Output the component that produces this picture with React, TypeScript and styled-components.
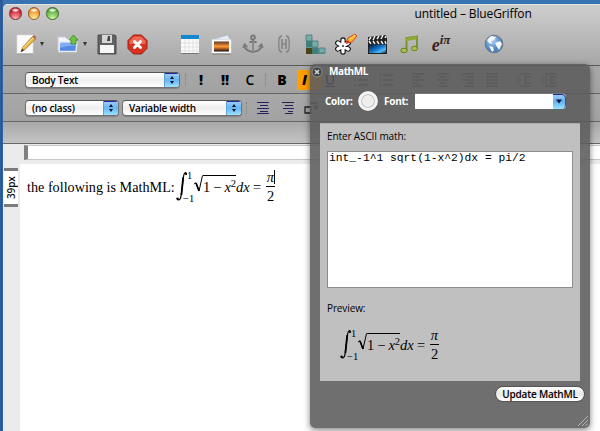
import React from "react";
import styled, { createGlobalStyle } from "styled-components";

const UI = `"Open Sans", "Noto Sans", sans-serif`;

const Global = createGlobalStyle`
  * { box-sizing: border-box; }
  html, body { margin: 0; overflow: hidden; }
  svg { display: block; flex: none; }
`;

const Desktop = styled.div`
  width: 600px;
  height: 431px;
  padding: 4px 0 0 3px;
  overflow: hidden;
  position: relative;
  background: linear-gradient(90deg, #3060a0 0, #285290 2px, #3974b2 3px);
  font-family: ${UI};
  color: #111;
`;
const AppWindow = styled.div`
  width: 597px;
  height: 427px;
  display: flex;
  flex-direction: column;
  border-top-left-radius: 5px;
  overflow: hidden;
  background: #fff;
`;
const Header = styled.header`
  height: 62px;
  flex: none;
  border-top: 1px solid #e3e3e3;
  border-bottom: 1px solid #595959;
  background: linear-gradient(#cecece, #a7a7a7);
`;
const TitleBar = styled.div`
  height: 17px;
  display: flex;
  align-items: center;
  padding-left: 6px;
  gap: 6px;
`;
const Light = styled.i<{ $rim: string; $top: string; $low: string }>`
  width: 12.5px;
  height: 12.5px;
  border-radius: 50%;
  border: 1px solid ${(p) => p.$rim};
  background: radial-gradient(ellipse 4px 2px at 50% 20%, #fff 0, #fff9 60%, transparent 100%),
    radial-gradient(circle at 50% 95%, ${(p) => p.$low} 0, ${(p) => p.$top} 75%);
`;
const Title = styled.div`
  margin-left: 350px;
  font-size: 12px;
  line-height: 17px;
  letter-spacing: -0.12px;
  font-weight: 500;
  white-space: nowrap;
  color: #000;
`;
const MainTools = styled.div`
  height: 44px;
  display: flex;
  align-items: center;
  padding-left: 12px;
`;
const Slot = styled.span<{ $w: number; $gap?: number }>`
  width: ${(p) => p.$w}px;
  margin-left: ${(p) => p.$gap ?? 0}px;
  flex: none;
  display: flex;
  align-items: center;
  justify-content: center;
`;
const Caret = styled.i<{ $gap: number }>`
  margin: 0 0 0 ${(p) => p.$gap}px;
  border: 2.5px solid transparent;
  border-top: 4px solid #333;
  border-bottom: 0;
`;
const Row = styled.div`
  height: 28px;
  flex: none;
  display: flex;
  align-items: center;
  padding-left: 22px;
  border-bottom: 1px solid #666;
  background: linear-gradient(#a8a8a8, #a2a2a2);
`;
const SelectBox = styled.div<{ $w: number; $gap?: number }>`
  width: ${(p) => p.$w}px;
  height: 16px;
  margin-left: ${(p) => p.$gap ?? 0}px;
  flex: none;
  display: flex;
  justify-content: space-between;
  border: 1px solid #727272;
  border-top-color: #555;
  border-radius: 4px;
  overflow: hidden;
  background: linear-gradient(#fff, #eee 50%, #fff);
  box-shadow: 0 1px 1px #6668;
  padding-left: 6px;
  font-size: 10px;
  line-height: 14px;
  font-weight: 600;
  letter-spacing: -0.2px;
  color: #000;
  white-space: nowrap;
`;
const Stepper = styled.span`
  width: 15px;
  display: flex;
  align-items: center;
  justify-content: center;
  border-left: 1px solid #5a9fd6;
  box-shadow: inset 0 1px #2727a8;
  background: linear-gradient(#a2cdf3, #67b5f2 50%, #9be2ff);
`;
const Grip = styled.i<{ $gap: number }>`
  width: 2px;
  height: 12px;
  margin-left: ${(p) => p.$gap}px;
  border-left: 1px dotted #808080;
  flex: none;
`;
const Glyph = styled.span<{ $w: number; $gap?: number; $bold?: boolean; $on?: boolean }>`
  width: ${(p) => p.$w}px;
  height: ${(p) => (p.$on ? 20 : 18)}px;
  margin-left: ${(p) => p.$gap ?? 0}px;
  padding-left: ${(p) => (p.$on ? 5 : 0)}px;
  flex: none;
  font-size: 14px;
  line-height: ${(p) => (p.$on ? 20 : 18)}px;
  font-weight: ${(p) => (p.$bold ? 800 : 600)};
  text-align: ${(p) => (p.$on ? "left" : "center")};
  font-style: ${(p) => (p.$on ? "italic" : "normal")};
  background: ${(p) => (p.$on ? "#ffa000" : "none")};
  color: #000;
`;
const TabStrip = styled.div`
  height: 22px;
  flex: none;
  border-bottom: 1px solid #666;
  background: linear-gradient(#a8a8a8, #c3c3c3);
`;
const Editor = styled.main`
  flex: 1;
  display: flex;
  background: #ebebeb;
`;
const Gutter = styled.aside`
  width: 17px;
  padding: 24px 0 0 1px;
`;
const HeightMark = styled.div`
  width: 14px;
  height: 39px;
  display: flex;
  align-items: center;
  justify-content: center;
  border: solid #7b7b7b;
  border-width: 3px 0;
  background: #fff;
  writing-mode: vertical-rl;
  transform: rotate(180deg);
  font-size: 10px;
  line-height: 14px;
  font-weight: 600;
  letter-spacing: -0.1px;
`;
const Column = styled.div`
  flex: 1;
  display: flex;
  flex-direction: column;
`;
const Ruler = styled.div`
  height: 15px;
  margin: 1px 0 4px 4px;
  border: 1px solid #c6c6c6;
  border-width: 1px 0 1px 4px;
  border-left-color: #808080;
  background: #fff;
`;
const Page = styled.article`
  flex: 1;
  padding: 6px 0 0 7px;
  display: flex;
  align-items: flex-start;
  background: #fff;
`;
const Sentence = styled.span`
  width: 149px;
  flex: none;
  font: 14.2px/20px "Liberation Serif", serif;
  margin-top: 7px;
  white-space: nowrap;
  color: #000;
`;

const MathBox = styled.div`
  display: flex;
  height: 42px;
  color: #000;
  font: 14.5px/18px "Liberation Serif", serif;
  white-space: nowrap;
`;
const Limits = styled.span`
  width: 11px;
  height: 34px;
  display: flex;
  flex-direction: column;
  justify-content: space-between;
  margin-left: -8px;
  font-size: 10.5px;
  line-height: 11px;
`;
const Upper = styled.span`
  padding-left: 4px;
`;
const Radicand = styled.span`
  width: 33px;
  height: 20px;
  margin-top: 5px;
  border-top: 1px solid #000;
  line-height: 22px;
  letter-spacing: -0.3px;
`;
const Power = styled.sup`
  font-size: 10.5px;
  line-height: 0;
  vertical-align: 5px;
`;
const Term = styled.span<{ $w: number }>`
  width: ${(p) => p.$w}px;
  margin-top: 8px;
`;
const Fraction = styled.span`
  width: 9px;
  display: flex;
  flex-direction: column;
  text-align: center;
  line-height: 18px;
`;
const Numerator = styled.span<{ $caret?: boolean }>`
  height: 17px;
  line-height: 15px;
  border-bottom: 1px solid #000;
  font-style: italic;
  ${(p) => p.$caret && "background: linear-gradient(#000, #000) right top / 1px 14px no-repeat;"}
`;

const Panel = styled.section`
  position: absolute;
  left: 310px;
  top: 64px;
  width: 280px;
  height: 364px;
  padding: 0 10px;
  border-radius: 5px;
  background: rgba(92, 92, 92, 0.885);
  box-shadow: 0 2px 6px rgba(0, 0, 0, 0.5);
`;
const PanelTitle = styled.div`
  height: 15px;
  margin-left: -9px;
  display: flex;
  align-items: center;
  gap: 6px;
  font-size: 10px;
  line-height: 15px;
  font-weight: 700;
  letter-spacing: -0.4px;
  color: #fff;
`;
const Controls = styled.div`
  height: 44px;
  display: flex;
  align-items: center;
  padding-left: 5px;
  font-size: 10px;
  font-weight: 700;
  letter-spacing: -0.25px;
  color: #fff;
`;
const ControlLabel = styled.span<{ $w: number }>`
  width: ${(p) => p.$w}px;
  flex: none;
`;
const Swatch = styled.i`
  width: 20px;
  height: 20px;
  margin-right: 6px;
  border-radius: 50%;
  border: 3px solid #f4f4f4;
  background: #eee;
  box-shadow: inset 0 0 0 1px #bebebe, 0 0 1px #333;
`;
const FontBox = styled.div`
  width: 151px;
  height: 16px;
  display: flex;
  justify-content: flex-end;
  border-radius: 0 4px 4px 0;
  border-top: 1px solid #777;
  overflow: hidden;
  background: #fff;
`;
const FontArrow = styled.span`
  width: 13px;
  display: flex;
  align-items: center;
  justify-content: center;
  border-right: 1px solid #31559c;
  border-radius: 0 4px 4px 0;
  box-shadow: inset 0 1px #26269c;
  background: linear-gradient(#a5cef4, #60b2f2 50%, #9be2ff);
`;
const Sheet = styled.div`
  width: 260px;
  height: 258px;
  border-top: 1px solid #aaa;
  padding: 5px 7px;
  background: #c0c0c0;
`;
const Caption = styled.div`
  height: 15px;
  font-size: 10px;
  line-height: 15px;
  letter-spacing: -0.12px;
  font-weight: 500;
  color: #000;
`;
const Source = styled.div`
  height: 137px;
  width: 246px;
  margin: 7px 0 13px;
  padding: 0 1px;
  border: 1px solid #8e8e8e;
  background: #fff;
  font: 11.3px/12px "Liberation Mono", monospace;
  color: #000;
  white-space: pre;
`;
const Preview = styled.div`
  padding: 12px 0 0 13px;
`;
const PushButton = styled.div`
  width: 90px;
  height: 16px;
  margin: 5px -5px 0 auto;
  border: 1px solid #555;
  border-radius: 9px;
  background: linear-gradient(#fff, #e8e8e8 50%, #fff);
  font-size: 10px;
  line-height: 14px;
  font-weight: 600;
  text-align: center;
  letter-spacing: -0.2px;
  color: #000;
  white-space: nowrap;
`;
const Resizer = styled.div`
  position: absolute;
  right: 2px;
  bottom: 2px;
`;

const UpDown = () => (
  <svg width="6" height="10" viewBox="0 0 6 10">
    <path d="M3 1 5 4H1ZM3 9 1 6H5Z" fill="#07122a" />
  </svg>
);

const Select = ({ label, width, gap }: { label: string; width: number; gap?: number }) => (
  <SelectBox $w={width} $gap={gap}>
    {label}
    <Stepper><UpDown /></Stepper>
  </SelectBox>
);

const Formula = ({ caret }: { caret?: boolean }) => (
  <MathBox>
    <svg width="15" height="34" viewBox="0 0 15 34">
      <path d="M10.5 4.4C10.5 2 8.4 1.5 7.6 6L5.2 25C4.6 30.5 2 31 1 28.2" fill="none" stroke="#000" strokeWidth="1.2" />
      <path d="M7.2 7 5.4 25" stroke="#000" strokeWidth="1.8" />
      <circle cx="10" cy="4" r="1.1" /><circle cx="1.6" cy="28.8" r="1.2" />
    </svg>
    <Limits><Upper>1</Upper><span>−1</span></Limits>
    <svg width="9" height="27" viewBox="0 0 9 27">
      <path d="M0 14 2 12.7 5 21 8.5 5.5" fill="none" stroke="#000" />
      <path d="M2 13 5 21" stroke="#000" strokeWidth="1.7" />
    </svg>
    <Radicand>1 − <i>x</i><Power>2</Power></Radicand>
    <Term $w={17}><i>dx</i></Term>
    <Term $w={13}>=</Term>
    <Fraction><Numerator $caret={caret}>π</Numerator><span>2</span></Fraction>
  </MathBox>
);

const NewIcon = () => (
  <svg width="22" height="22" viewBox="0 0 22 22">
    <path d="M2 2H18V21H2Z" fill="#fbfbfb" stroke="#ddd" strokeWidth=".6" />
    <path d="M2 21H18" stroke="#888" />
    <path d="M6 19 7.5 14.5 17.5 3.5 20.5 6 10 16.5Z" fill="#efb73e" stroke="#8d6429" strokeWidth=".7" />
    <path d="m8 15 10-10" stroke="#ffe391" /><path d="m17.5 3.5 1.5-1.5 2.5 2-1.3 2Z" fill="#b5676a" />
    <path d="m6 19 1-3 2 1Z" fill="#222" />
  </svg>
);
const OpenIcon = () => (
  <svg width="22" height="20" viewBox="0 0 22 20">
    <path d="M1 3H8L10 5H18V16H1Z" fill="#f4f5f8" stroke="#c9ced8" />
    <path d="M3 8H20L19 17.5H2Z" fill="#5589e2" stroke="#e3ecfa" strokeWidth="1.4" />
    <path d="M4 9H19L18.7 12Q10 11 4 14Z" fill="#80acf2" />
    <path d="m16.5 1 4.5 5H19V10H14V6H12Z" fill="#6fc23c" stroke="#3f8426" strokeWidth=".8" />
  </svg>
);
const SaveIcon = () => (
  <svg width="20" height="21" viewBox="0 0 20 21">
    <path d="M1 1H18L19 2V20H1Z" fill="#626262" stroke="#4d4d4d" />
    <path d="M5 1H15V9H5Z" fill="#d6d6d6" /><path d="M11 2H13V7H10Z" fill="#444" />
    <path d="M3 11H17V19H3Z" fill="#f6f6f6" />
  </svg>
);
const StopIcon = () => (
  <svg width="21" height="21" viewBox="0 0 21 21">
    <path d="M6.5 1H14.5L20 6.5V14.5L14.5 20H6.5L1 14.5V6.5Z" fill="#d9301f" stroke="#9b2117" />
    <path d="M7 2.5H14L18.5 7V10H2.5V7Z" fill="#ed6955" />
    <path d="m7.5 7.5 6 6M13.5 7.5l-6 6" stroke="#fff" strokeWidth="3" strokeLinecap="round" />
  </svg>
);
const TableIcon = () => (
  <svg width="20" height="20" viewBox="0 0 20 20">
    <path d="M1 1H19V19H1Z" fill="#fafafa" /><path d="M1 1H19V5H1Z" fill="#1587cf" />
    <path d="M5 5V19M9 5V19M13 5V19M17 5V19M1 9H19M1 13H19M1 17H19" stroke="#d5d8da" strokeWidth=".7" />
    <path d="M1 19.5H19" stroke="#777" />
  </svg>
);
const ImageIcon = () => (
  <svg width="21" height="21" viewBox="0 0 21 21">
    <defs><linearGradient id="dusk" x2="0" y2="1"><stop stopColor="#5e352c" /><stop offset=".5" stopColor="#ff9b36" /><stop offset=".75" stopColor="#9b5126" /><stop offset="1" stopColor="#160e0b" /></linearGradient></defs>
    <path d="m3 5 14-4 2 5Z" fill="#e8ecf7" stroke="#a9b4d1" strokeWidth=".6" />
    <path d="M1 5.5H20V19.5H1Z" fill="#fff" stroke="#ddd" strokeWidth=".5" />
    <path d="M3 7.5H18V17.5H3Z" fill="url(#dusk)" /><path d="M1 20H20" stroke="#777" />
  </svg>
);
const AnchorIcon = () => (
  <svg width="22" height="21" viewBox="0 0 22 21" fill="none" stroke="#777" strokeWidth="1.8">
    <circle cx="11" cy="3.5" r="2" /><path d="M11 6V19M7.5 8H14.5M2.5 11C2.5 20 19.5 20 19.5 11" />
    <path d="m1 14 1.5-4 3 3M21 14l-1.5-4-3 3" strokeWidth="1.2" />
    <path d="M11 7V18" stroke="#aaa" strokeWidth=".7" />
  </svg>
);
const LinkIcon = () => (
  <svg width="14" height="20" viewBox="0 0 14 20" fill="none" stroke="#858585" strokeWidth="1.7">
    <path d="M5 2H4Q2 3 2 6V14Q2 17 4 18H5M9 2H10Q12 3 12 6V14Q12 17 10 18H9M5 5V15M9 5V15M5 10H9" />
    <path d="M3 5V15M11 5V15" stroke="#b5b5b5" strokeWidth=".7" />
  </svg>
);
const BlocksIcon = () => (
  <svg width="21" height="21" viewBox="0 0 21 21">
    <path d="M1 1H7V7H13V14H20V20H1Z" fill="#5a9893" />
    <path d="M1 1H7V7H1ZM7 7H13V13H7ZM14 14H20V19H14Z" fill="#77ada6" stroke="#3d716e" strokeWidth=".7" />
    <path d="M1 7H7V13H1ZM7 14H13V20H7Z" fill="#407d7b" /><path d="M1 14H7V20H1Z" fill="#494516" />
  </svg>
);
const CssIcon = () => (
  <svg width="24" height="22" viewBox="0 0 24 22">
    {[["#111", 5.4], ["#fff", 3.2]].map(([c, w]) => (
      <path key={c} d="M8 7V19M2.8 10 13.2 16M2.8 16 13.2 10" stroke={c as string} strokeWidth={w} strokeLinecap="round" />
    ))}
    <circle cx="8" cy="13" r="1.2" fill="#666" />
    <path d="m11 10 2-5 7-4 2 2-5 6Z" fill="#ffb028" stroke="#d44a23" />
    <path d="m11 11 1.5-4 3 2.5Z" fill="#db3620" /><path d="m15 6 5-4" stroke="#ffe86c" />
  </svg>
);
const VideoIcon = () => (
  <svg width="21" height="21" viewBox="0 0 21 21">
    <defs><linearGradient id="film" x2="1" y2="1"><stop stopColor="#041938" /><stop offset=".5" stopColor="#1474cc" /><stop offset=".75" stopColor="#51bdf4" /><stop offset="1" stopColor="#062b63" /></linearGradient></defs>
    <path d="M1 3 19 1 20 5V20H1Z" fill="#202020" />
    <path d="m2 6 2-3M6 6l2-4M10 5l2-3M14 5l2-4M18 4l1-2M2 7l2 3M6 7l2 3M10 7l2 3M14 7l2 3M18 7l1 3" stroke="#eee" strokeWidth="1.4" />
    <path d="M2 10.5H19V19H2Z" fill="url(#film)" />
  </svg>
);
const MusicIcon = () => (
  <svg width="19" height="19" viewBox="0 0 19 19">
    <path d="M6.5 16V3L17 1.5V14" fill="none" stroke="#758f2a" strokeWidth="1.8" /><path d="M6 4.5 17 2.8" stroke="#8dab32" strokeWidth="3" />
    <ellipse cx="4" cy="15.5" rx="3.2" ry="2.3" fill="#a5c04c" stroke="#667f20" />
    <ellipse cx="14.5" cy="13.5" rx="3" ry="2.3" fill="#a5c04c" stroke="#667f20" />
  </svg>
);
const Euler = styled.span`
  font: italic 600 18px/20px "Liberation Serif", serif;
  color: #3a2118;
  white-space: nowrap;
  padding-top: 1px;
`;
const Exponent = styled.sup`
  font-size: 13px;
  line-height: 0;
  vertical-align: 7px;
`;
const GlobeIcon = () => (
  <svg width="20" height="20" viewBox="0 0 20 20">
    <defs><radialGradient id="sea" cx=".4" cy=".3"><stop stopColor="#b9d5f4" /><stop offset="1" stopColor="#4d83c0" /></radialGradient></defs>
    <circle cx="10" cy="10" r="8.8" fill="url(#sea)" stroke="#6d7582" />
    <path d="M3 6 7 2 12 3 10 6 7 7 8 10 5 9ZM11 9l5-2 2 3-3 6-2-3ZM5 12l4 1 1 3-2 2Z" fill="#f4f8fc" />
  </svg>
);
const Indent = ({ right }: { right?: boolean }) => (
  <svg width="14" height="14" viewBox="0 0 14 14">
    <path d={right ? "M1 1.5H13M4 4.5H12M2 7.5H13M7 10.5H12M4 12.5H12" : "M1 1.5H13M4 4.5H12M1 7.5H13M4 10.5H12M1 12.5H13"} stroke="#25225f" strokeWidth="1.2" />
  </svg>
);
const BoxTurn = () => (
  <svg width="16" height="14" viewBox="0 0 16 14" fill="none" stroke="#222" strokeWidth="1.3">
    <path d="M2 6H8V12H2ZM7 2H13V7M10.5 5 13 8 15.5 5" />
  </svg>
);
const lineShapes: Record<string, string> = {
  bullets: "M0 2H2M4 2H14M0 7H2M4 7H14M0 12H2M4 12H14",
  left: "M0 1H12M0 4H8M0 7H12M0 10H7M0 13H10",
  center: "M0 1H12M3 4H9M0 7H12M3 10H9M1 13H11",
  right: "M0 1H12M4 4H12M0 7H12M5 10H12M2 13H12",
  full: "M0 1H12M0 4H12M0 7H12M0 10H12M0 13H12",
};
const Lines = ({ kind }: { kind: string }) => (
  <svg width="14" height="14" viewBox="0 0 14 14"><path d={lineShapes[kind]} stroke="#222" strokeWidth="1.1" /></svg>
);
const Shift = ({ back }: { back?: boolean }) => (
  <svg width="15" height="14" viewBox="0 0 15 14">
    <path d="M3 1H14M7 4H14M7 7H12M7 10H14M3 13H14" stroke="#222" />
    <path d={back ? "M4 3V11L0 7Z" : "M0 3V11L4 7Z"} fill="none" stroke="#087800" />
  </svg>
);

export default function App() {
  return (
    <Desktop>
      <Global />
      <AppWindow>
        <Header>
          <TitleBar>
            <Light $rim="#7c3038" $top="#c41428" $low="#ffb4b4" />
            <Light $rim="#965d25" $top="#ea8927" $low="#fff39a" />
            <Light $rim="#426b2f" $top="#54a43a" $low="#cdfaa0" />
            <Title>untitled – BlueGriffon</Title>
          </TitleBar>
          <MainTools>
            <Slot $w={22}><NewIcon /></Slot><Caret $gap={3} />
            <Slot $w={22} $gap={13}><OpenIcon /></Slot><Caret $gap={4} />
            <Slot $w={20} $gap={10}><SaveIcon /></Slot>
            <Slot $w={21} $gap={10}><StopIcon /></Slot>
            <Slot $w={20} $gap={32}><TableIcon /></Slot>
            <Slot $w={21} $gap={11}><ImageIcon /></Slot>
            <Slot $w={22} $gap={10}><AnchorIcon /></Slot>
            <Slot $w={14} $gap={13}><LinkIcon /></Slot>
            <Slot $w={21} $gap={14}><BlocksIcon /></Slot>
            <Slot $w={24} $gap={9}><CssIcon /></Slot>
            <Slot $w={21} $gap={8}><VideoIcon /></Slot>
            <Slot $w={19} $gap={12}><MusicIcon /></Slot>
            <Slot $w={22} $gap={11}><Euler>e<Exponent>iπ</Exponent></Euler></Slot>
            <Slot $w={20} $gap={32}><GlobeIcon /></Slot>
          </MainTools>
        </Header>
        <Row>
          <Select label="Body Text" width={155} />
          <Grip $gap={5} />
          <Glyph $w={16} $gap={6} $bold>!</Glyph>
          <Glyph $w={20} $gap={6} $bold>‼</Glyph>
          <Glyph $w={16} $gap={7}>C</Glyph>
          <Grip $gap={7} />
          <Glyph $w={20} $gap={5} $bold>B</Glyph>
          <Glyph $w={25} $gap={5} $bold $on>I</Glyph>
          <Glyph $w={16}><u>U</u></Glyph>
          <Slot $w={14} $gap={16}><Lines kind="bullets" /></Slot>
          <Slot $w={14} $gap={11}><Lines kind="bullets" /></Slot>
          <Slot $w={14} $gap={19}><Lines kind="left" /></Slot>
          <Slot $w={14} $gap={11}><Lines kind="center" /></Slot>
          <Slot $w={14} $gap={11}><Lines kind="right" /></Slot>
          <Slot $w={14} $gap={10}><Lines kind="full" /></Slot>
          <Slot $w={15} $gap={17}><Shift /></Slot>
          <Slot $w={15} $gap={10}><Shift back /></Slot>
        </Row>
        <Row>
          <Select label="(no class)" width={94} />
          <Select label="Variable width" width={120} gap={3} />
          <Grip $gap={4} />
          <Slot $w={14} $gap={8}><Indent /></Slot>
          <Slot $w={14} $gap={11}><Indent right /></Slot>
          <Slot $w={16} $gap={8}><BoxTurn /></Slot>
        </Row>
        <TabStrip />
        <Editor>
          <Gutter><HeightMark>39px</HeightMark></Gutter>
          <Column>
            <Ruler />
            <Page>
              <Sentence>the following is MathML:</Sentence>
              <Formula caret />
            </Page>
          </Column>
        </Editor>
      </AppWindow>

      <Panel>
        <PanelTitle>
          <svg width="12" height="12" viewBox="0 0 12 12">
            <circle cx="6" cy="6" r="5" fill="#444" stroke="#999" strokeWidth=".8" />
            <path d="m4 4 4 4M8 4 4 8" stroke="#ddd" strokeWidth="1.3" />
          </svg>
          MathML
        </PanelTitle>
        <Controls>
          <ControlLabel $w={33}>Color:</ControlLabel>
          <Swatch />
          <ControlLabel $w={31}>Font:</ControlLabel>
          <FontBox>
            <FontArrow><svg width="6" height="5" viewBox="0 0 6 5"><path d="M0 .5H6L3 4.5Z" fill="#07122a" /></svg></FontArrow>
          </FontBox>
        </Controls>
        <Sheet>
          <Caption>Enter ASCII math:</Caption>
          <Source>int_-1^1 sqrt(1-x^2)dx = pi/2</Source>
          <Caption>Preview:</Caption>
          <Preview><Formula /></Preview>
        </Sheet>
        <PushButton>Update MathML</PushButton>
        <Resizer>
          <svg width="10" height="10" viewBox="0 0 10 10"><path d="M0 10 10 0M4 10l6-6M7.5 10 10 7.5" stroke="#b5b5b5" /></svg>
        </Resizer>
      </Panel>
    </Desktop>
  );
}
